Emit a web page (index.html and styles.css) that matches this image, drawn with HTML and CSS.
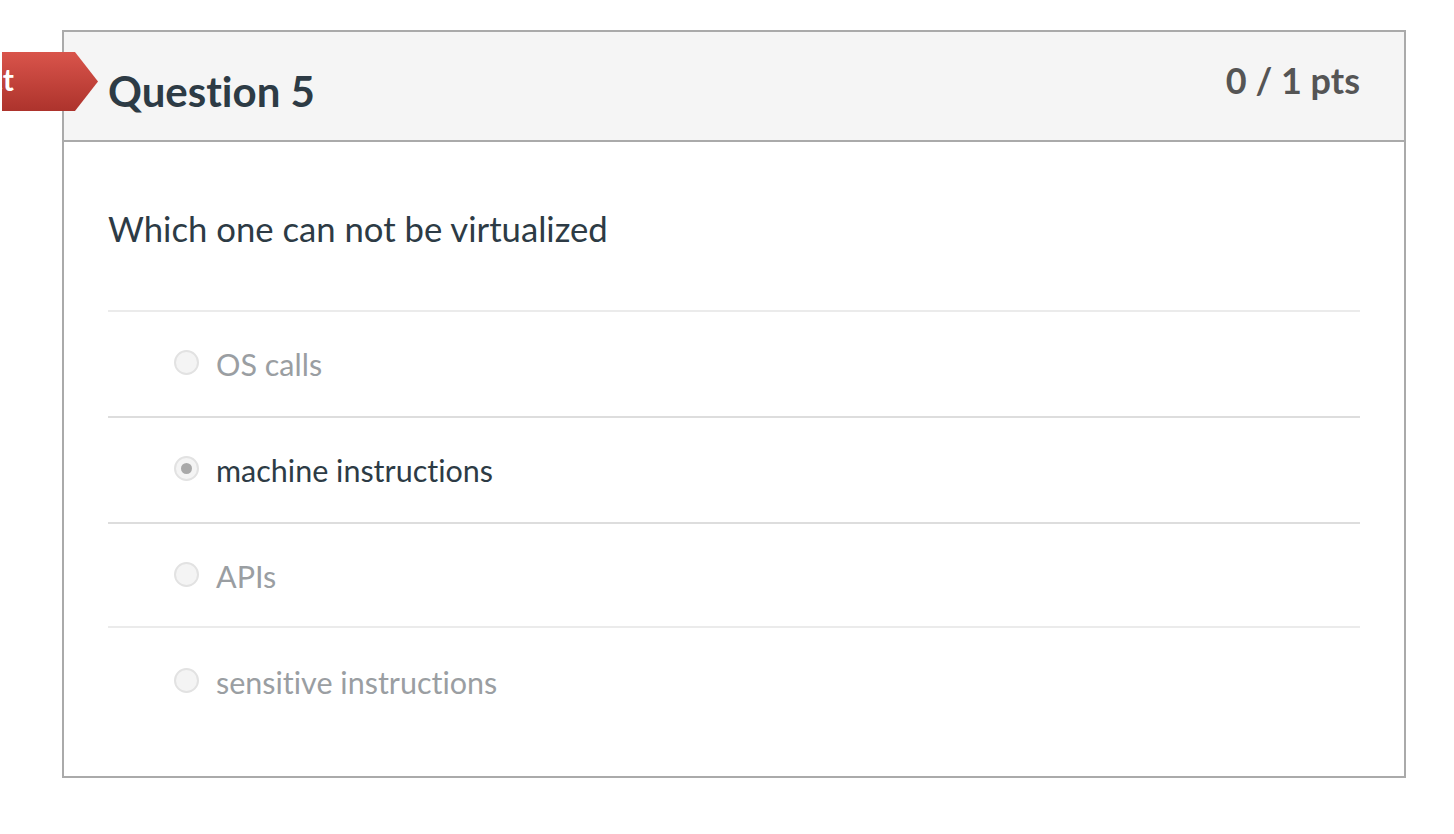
FILE: index.html
```html
<!DOCTYPE html>
<html>
<head>
<meta charset="utf-8">
<link rel="stylesheet" href="styles.css">
</head>
<body>
<div class="page">
  <div class="question">
    <div class="flag"><span class="flag-text">Incorrect</span></div>
    <div class="header">
      <h2 class="title">Question 5</h2>
      <div class="pts">0 / 1 pts</div>
    </div>
    <div class="body">
      <div class="qtext">Which one can not be virtualized</div>
      <div class="answers">
        <div class="answer muted"><span class="radio"></span><span class="label">OS calls</span></div>
        <div class="answer selected"><span class="radio"><span class="dot"></span></span><span class="label">machine instructions</span></div>
        <div class="answer muted"><span class="radio"></span><span class="label">APIs</span></div>
        <div class="answer muted last"><span class="radio"></span><span class="label">sensitive instructions</span></div>
      </div>
    </div>
  </div>
</div>
</body>
</html>
```
FILE: styles.css
```css
html, body {
  margin: 0;
  padding: 0;
  background: #fff;
  font-family: Lato, "Open Sans", sans-serif;
  color: #2d3b45;
  font-variant-ligatures: none;
  font-feature-settings: "liga" 0, "clig" 0;
}
.page {
  padding: 30px 0 0 62px;
}
.question {
  position: relative;
  width: 1340px;
  height: 744px;
  border: 2px solid #aaaaaa;
}
.flag {
  position: absolute;
  left: -62px;
  top: 20px;
  width: 96px;
  height: 59px;
  background: linear-gradient(#d9544b, #ad332c);
  clip-path: polygon(0 0, 73px 0, 96px 50%, 73px 100%, 0 100%);
  overflow: hidden;
  z-index: 2;
}
.flag-text {
  position: absolute;
  right: 84px;
  top: 9px;
  color: #fff;
  font-weight: 700;
  font-size: 30px;
  white-space: nowrap;
}
.header {
  height: 108px;
  background: #f5f5f5;
  border-bottom: 2px solid #aaaaaa;
  display: flex;
  align-items: center;
  justify-content: space-between;
  padding: 0 44px;
}
.title {
  margin: 0;
  font-size: 42px;
  font-weight: 700;
  color: #2d3b45;
  padding-top: 10px;
}
.pts {
  font-size: 36px;
  font-weight: 700;
  color: #555555;
  padding-bottom: 12px;
}
.body {
  padding: 0 44px;
}
.qtext {
  font-size: 34.7px;
  padding-top: 67px;
  height: 101px;
  line-height: 40px;
  box-sizing: content-box;
}
.answer {
  border-top: 2px solid #ebebeb;
  height: 104px;
  display: flex;
  align-items: center;
  padding-left: 66px;
}
.answer.selected {
  border-top-color: #dddddd;
  border-bottom: 2px solid #dddddd;
}
.answer.selected + .answer {
  border-top: none;
}
.answer.last {
  margin-top: -2px;
  padding-top: 4px;
  height: 100px;
}
.radio {
  width: 21px;
  height: 21px;
  border-radius: 50%;
  border: 2px solid #e2e2e2;
  background: #f4f4f4;
  display: flex;
  align-items: center;
  justify-content: center;
  margin-right: 17px;
  margin-top: -4px;
}
.dot {
  width: 11px;
  height: 11px;
  border-radius: 50%;
  background: #a9a9a9;
}
.label {
  font-size: 30.5px;
}
.muted .label {
  color: #9a9ea2;
}
```
